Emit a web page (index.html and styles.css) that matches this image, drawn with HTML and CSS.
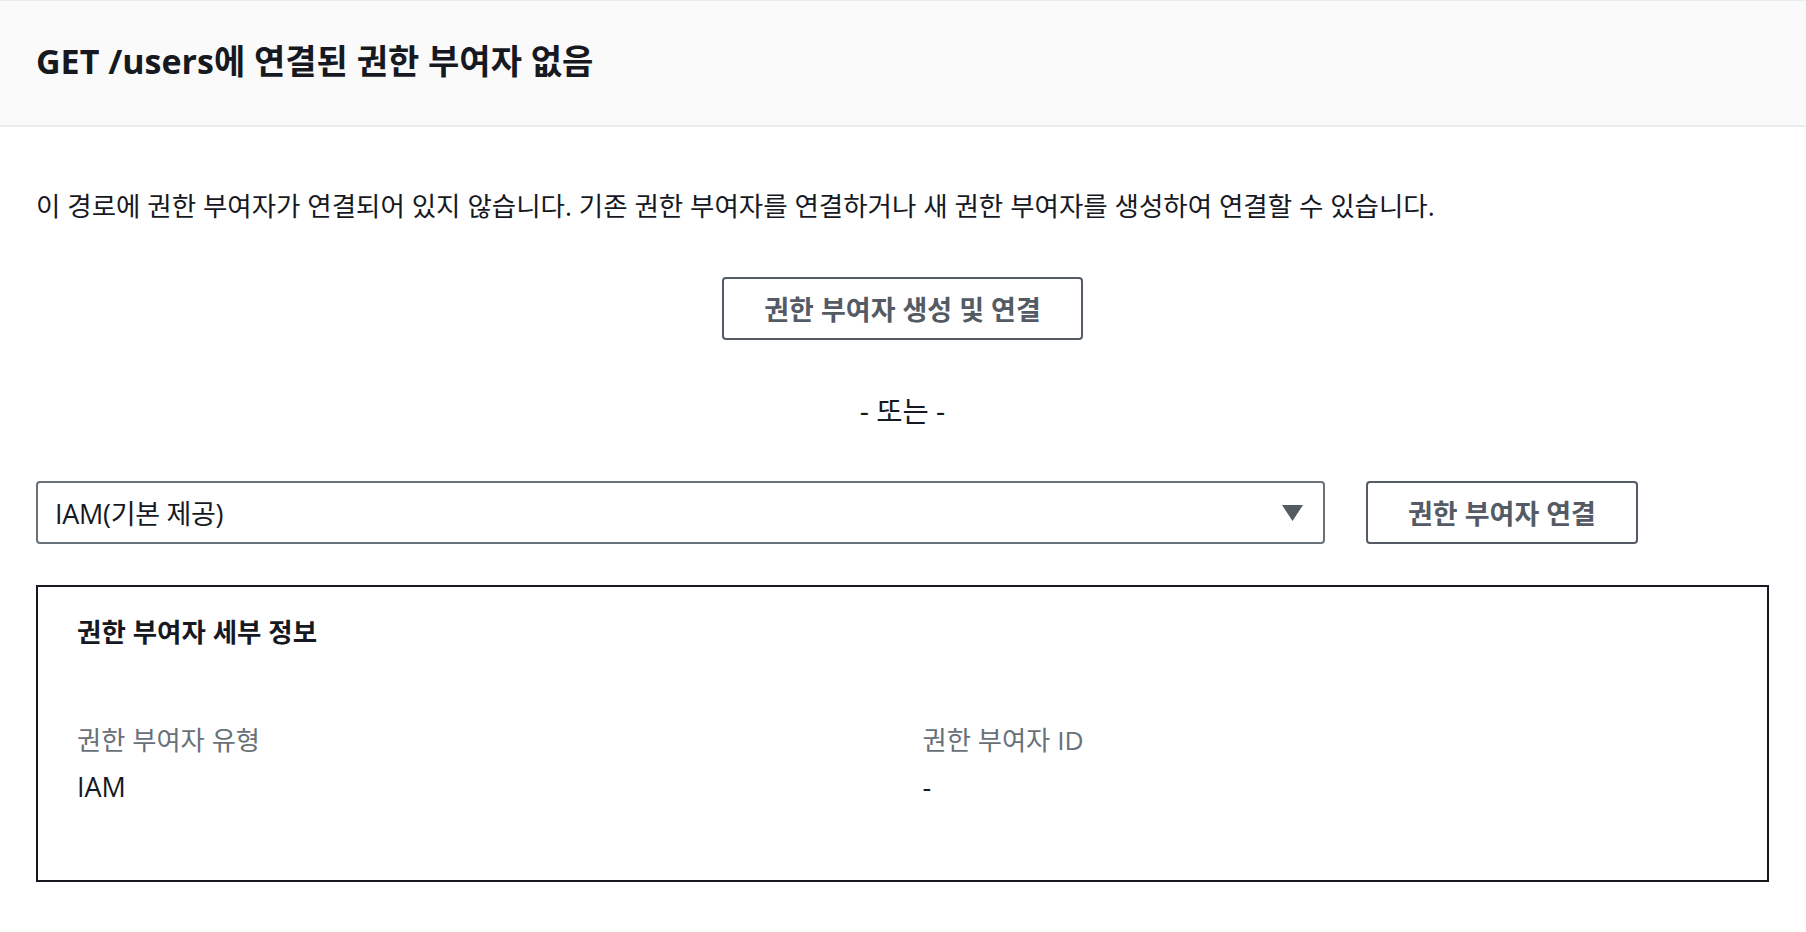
FILE: index.html
```html
<!DOCTYPE html>
<html lang="ko">
<head>
	<meta charset="UTF-8">
	<title>권한 부여자</title>
	<link rel="stylesheet" href="styles.css">
</head>
<body>
	<div class="header">
		<h2 class="title">GET /users에 연결된 권한 부여자 없음</h2>
	</div>
	<div class="content">
		<p class="intro">이 경로에 권한 부여자가 연결되어 있지 않습니다. 기존 권한 부여자를 연결하거나 새 권한 부여자를 생성하여 연결할 수 있습니다.</p>
		<button class="btn btn-create">권한 부여자 생성 및 연결</button>
		<div class="or">- 또는 -</div>
		<div class="attach-row">
			<div class="select">
				<span>IAM(기본 제공)</span>
				<svg class="caret" width="21" height="16" viewBox="0 0 21 16"><polygon points="0,0 21,0 10.5,16" fill="#545b64"/></svg>
			</div>
			<button class="btn btn-attach">권한 부여자 연결</button>
		</div>
		<div class="details">
			<h3 class="details-title">권한 부여자 세부 정보</h3>
			<div class="details-grid">
				<div>
					<div class="label">권한 부여자 유형</div>
					<div class="value">IAM</div>
				</div>
				<div>
					<div class="label">권한 부여자 ID</div>
					<div class="value">-</div>
				</div>
			</div>
		</div>
	</div>
</body>
</html>
```

FILE: styles.css
```css
*{
	margin: 0;
	padding: 0;
	box-sizing: border-box;
}
body{
	font-family: "Open Sans", "Noto Sans CJK KR", sans-serif;
	color: #16191f;
	background-color: #fff;
}
.header{
	height: 127px;
	padding: 0 36px 7px;
	background-color: #fafafa;
	border-top: 1px solid #eaeded;
	border-bottom: 2px solid #eaeded;
	display: flex;
	align-items: center;
}
.title{
	font-size: 34px;
	font-weight: 700;
}
.content{
	padding: 0 37px 0 36px;
}
.intro{
	margin-top: 59px;
	font-size: 26.5px;
	line-height: 40px;
}
.btn{
	height: 63px;
	background-color: #fff;
	border: 2px solid #545b64;
	border-radius: 4px;
	color: #545b64;
	font-family: inherit;
	font-size: 27px;
	font-weight: 700;
	cursor: pointer;
}
.btn-create{
	display: block;
	width: 361px;
	margin: 51px auto 0;
}
.or{
	margin-top: 51px;
	text-align: center;
	font-size: 28.5px;
	line-height: 40px;
}
.attach-row{
	margin-top: 50px;
	display: flex;
	gap: 41px;
}
.select{
	width: 1289px;
	height: 63px;
	padding: 0 20px 0 17px;
	border: 2px solid #687078;
	border-radius: 4px;
	display: flex;
	align-items: center;
	justify-content: space-between;
	font-size: 27px;
	letter-spacing: -0.3px;
}
.btn-attach{
	width: 272px;
}
.details{
	margin-top: 41px;
	border: 2px solid #16191f;
	padding: 27px 39px 75px;
}
.details-title{
	font-size: 26.5px;
	font-weight: 700;
	line-height: 36px;
}
.details-grid{
	margin-top: 73px;
	display: grid;
	grid-template-columns: 1fr 1fr;
	column-gap: 40px;
}
.label{
	font-size: 26.3px;
	line-height: 34px;
	color: #687078;
}
.value{
	margin-top: 12px;
	font-size: 27px;
	line-height: 36px;
}
```
